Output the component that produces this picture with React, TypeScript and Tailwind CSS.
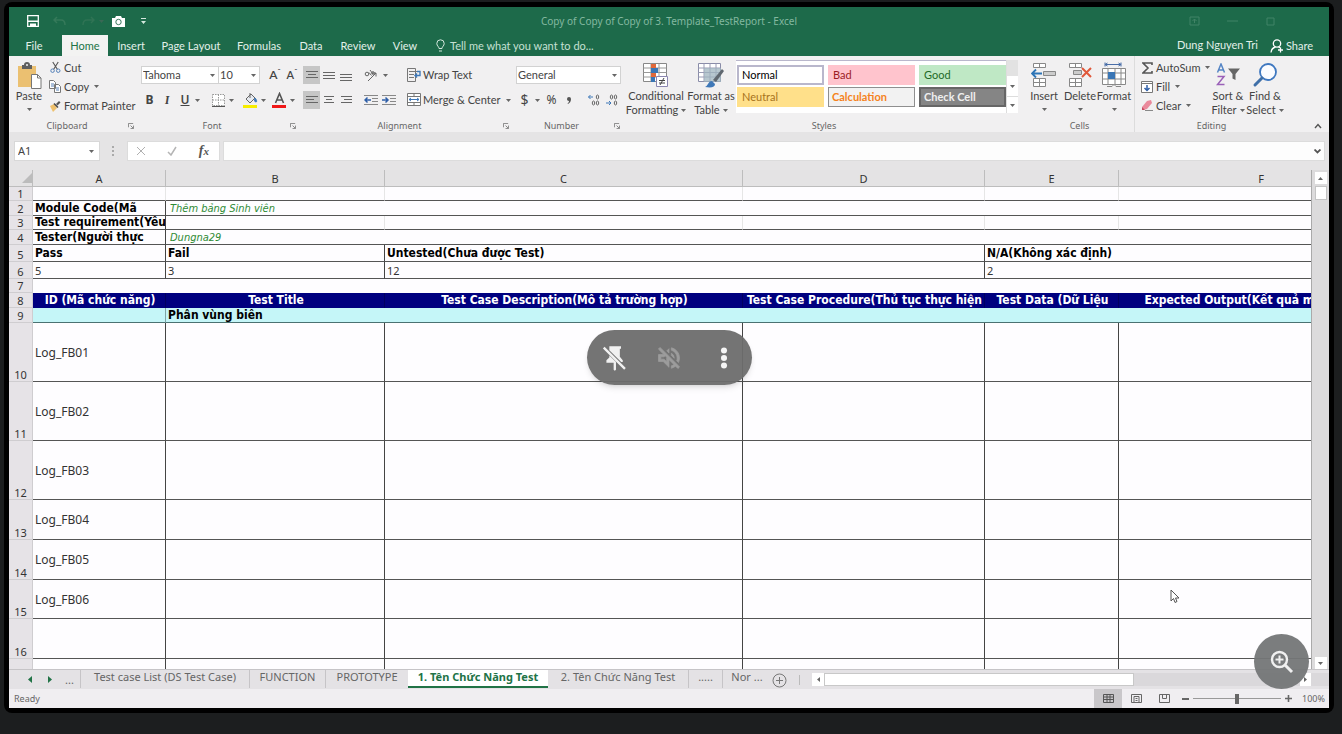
import { ReactNode } from "react";

const Caret = ({ className = "" }: { className?: string }) => (
  <svg viewBox="0 0 5 3" aria-hidden="true" className={`h-[3px] w-[5px] shrink-0 fill-[#666] ${className}`}>
    <path d="M0 0h5L2.5 3z" />
  </svg>
);

function Group({ label, className, launcher = false, trailing, children }: {
  label: string; className: string; launcher?: boolean; trailing?: ReactNode; children: ReactNode;
}) {
  return (
    <section aria-label={label} className={`flex shrink-0 flex-col ${className}`}>
      <div className="flex h-[64px] items-start">{children}</div>
      <div className="flex h-[12px] items-center font-['Noto_Sans',sans-serif] text-[9px] leading-[12px] text-[#666]">
        <span className="flex-1 text-center">{label}</span>
        {launcher && (
          <button aria-label={`${label} settings`} className="flex w-3 items-center justify-center">
            <svg viewBox="0 0 7 7" className="h-[6px] w-[6px] fill-none stroke-[#777]">
              <path d="M.5 5V.5H6M3 3l3 3M6.500 3v3.500H3" />
            </svg>
          </button>
        )}
        {trailing}
      </div>
    </section>
  );
}

const Row = ({ children, className = "" }: { children: ReactNode; className?: string }) => (
  <div className={`flex h-[18px] items-center ${className}`}>{children}</div>
);

function Dropdown({ label, value, className }: { label: string; value: string; className: string }) {
  return (
    <div className={`relative flex h-[18px] items-center border border-[#d2d2d2] bg-white ${className}`}>
      <select aria-label={label} className="h-full w-full appearance-none bg-transparent pl-px text-[11px] leading-[16px] text-[#444] outline-none">
        <option>{value}</option>
      </select>
      <Caret className="pointer-events-none absolute right-[3px]" />
    </div>
  );
}

function SmallCommand({ icon, text, caret = false }: { icon: ReactNode; text: string; caret?: boolean }) {
  return (
    <button className="flex h-[19px] items-center gap-[3px] whitespace-nowrap">
      <span className="flex w-3 justify-center">{icon}</span>
      {text}
      {caret && <Caret className="ml-[2px]" />}
    </button>
  );
}

function BigCommand({ icon, lines, className, caretLine = false }: {
  icon: ReactNode; lines: string[]; className: string; caretLine?: boolean;
}) {
  return (
    <button className={`flex shrink-0 flex-col items-center pt-[5px] leading-[14px] whitespace-nowrap ${className}`}>
      <span className="flex h-[28px] items-center justify-center">{icon}</span>
      <span>{lines[0]}</span>
      {caretLine ? (
        <span className="flex h-3 items-center"><Caret /></span>
      ) : (
        <span className="flex items-center gap-[3px]">{lines[1]}<Caret /></span>
      )}
    </button>
  );
}

const Lines = ({ d, className = "" }: { d: string; className?: string }) => (
  <svg viewBox="0 0 12 12" className={`h-3 w-3 fill-none stroke-[#666] ${className}`}>
    <path d={d} />
  </svg>
);

const AlignButton = ({ label, d, active = false }: { label: string; d: string; active?: boolean }) => (
  <button aria-label={label} className={`flex h-[18px] w-[17px] items-center justify-center ${active ? "bg-[#c6c6c6]" : ""}`}>
    <Lines d={d} />
  </button>
);

const cutIcon = (
  <svg viewBox="0 0 12 14" className="h-[13px] w-[11px] fill-none">
    <path d="M3 1l5 8M9 1L4 9" stroke="#555" strokeWidth="1.200" />
    <circle cx="2.800" cy="10.500" r="1.900" stroke="#4a7ab5" /><circle cx="9" cy="10.500" r="1.900" stroke="#4a7ab5" />
  </svg>
);
const copyIcon = (
  <svg viewBox="0 0 12 13" className="h-[13px] w-3" fill="#fff" stroke="#777">
    <path d="M.5.5h4l2 2v6h-6zM5.500 4.500h4l2 2v6h-6z" /><path d="M2 4h3M2 6h3M7 8h3M7 10h3" stroke="#5a83b8" />
  </svg>
);
const painterIcon = (
  <svg viewBox="0 0 12 12" className="h-3 w-3">
    <path d="M1 6l4-2 3 4-4 4z" fill="#eec06c" /><path d="M4.500 4l1-1 4 4-1 1z" fill="#444" /><path d="M7 4l3-3 1.500 1.500-3 3z" fill="#555" />
  </svg>
);
const pasteIcon = (
  <svg viewBox="0 0 25 27" className="h-[27px] w-[25px]">
    <path d="M1 4h18v21H1z" fill="#ebc071" /><path d="M5 3h2a3 3 0 0 1 6 0h2v4H5z" fill="#5f5f5f" />
    <circle cx="10" cy="3" r="1" fill="#f1f0f0" /><path d="M14.500 12.500h6l3.500 3.500v10.500h-9.500z" fill="#fff" stroke="#777" /><path d="M20.500 12.500V16H24" fill="none" stroke="#777" />
  </svg>
);
const conditionalIcon = (
  <svg viewBox="0 0 26 24" className="h-6 w-[26px]">
    <path d="M.5.500h23v18H.5z" fill="#fff" stroke="#888" /><path d="M.5 5h23M.5 9.500h23M.5 14h23M8 .5v18M16 .5v18" stroke="#999" />
    <path d="M8 1h5v4H8zM8 10h5v4H8z" fill="#e0683a" /><path d="M8 5h7v5H8zM8 14h4v5H8z" fill="#3a76b5" />
    <path d="M13.500 13.500h11v10h-11z" fill="#fff" stroke="#8a86b0" /><path d="M16 17.500h6M16 20h6M21 15l-4 7" stroke="#444" fill="none" />
  </svg>
);
const tableIcon = (
  <svg viewBox="0 0 26 25" className="h-[25px] w-[26px]">
    <path d="M.5.500h22v18H.5z" fill="#fff" stroke="#8a8ca8" /><path d="M.5 5h22M.5 9.500h22M.5 14h22M6 .5v18M12 .5v18M18 .5v18" stroke="#9a9cb4" />
    <path d="M6 5h17v14H6z" fill="#9fb4bf" opacity=".75" /><path d="M24 6l2 2-8 11-3-2z" fill="#606870" /><path d="M7 24c3-1 3-6 7-6l3 3c0 3-3 4-10 3z" fill="#3f78b8" />
  </svg>
);
const insertIcon = (
  <svg viewBox="0 0 26 26" className="h-[26px] w-[26px]" fill="#fff" stroke="#888">
    <path d="M2.500 1.500h12v4h-12zM8.500 1.500v4M2.500 16.500h12v8h-12zM8.500 16.500v8M2.500 20.500h12" /><path d="M12.500 9.500h12v4h-12z" fill="#ccc" />
    <path d="M1 11.500h10M5 7.500l-4 4 4 4" fill="none" stroke="#2e75b6" strokeWidth="1.800" />
  </svg>
);
const deleteIcon = (
  <svg viewBox="0 0 26 26" className="h-[26px] w-[26px]" fill="#fff" stroke="#888">
    <path d="M2.500 1.500h12v4h-12zM8.500 1.500v4M2.500 16.500h12v8h-12zM8.500 16.500v8M2.500 20.500h12" /><path d="M6.500 8.500h8v4h-8z" fill="#ccc" />
    <path d="M15 6l9 9M24 6l-9 9" fill="none" stroke="#e0583a" strokeWidth="2" />
  </svg>
);
const formatIcon = (
  <svg viewBox="0 0 26 26" className="h-[26px] w-[26px]" fill="#fff" stroke="#888">
    <path d="M1.500 6.500h23v16h-23zM1.500 11h23M1.500 17h23M7 6.500v16M14 6.500v16M20 6.500v16" /><path d="M7 10h7v7H7z" fill="#3a76b5" stroke="none" />
    <path d="M4 2.500h16M4 .5v4M20 .5v4M6.500 1L4 2.500 6.500 4M17.500 1L20 2.500 17.500 4" fill="none" stroke="#4a6ea8" /><path d="M6 24.500h5l2-2 2 2h5" />
  </svg>
);
const sortIcon = (
  <svg viewBox="0 0 25 24" className="h-6 w-[25px] fill-none">
    <path d="M1.500 9.500L5 1l3.500 8.500M3 7h4" stroke="#5585c5" strokeWidth="1.500" /><path d="M1.500 13.500H8L1.500 21.500H8.500" stroke="#9a60b8" strokeWidth="1.500" />
    <path d="M12 5.500h12L19.500 11v6l-3-1.500V11z" fill="#666" />
  </svg>
);
const findIcon = (
  <svg viewBox="0 0 26 26" className="h-[26px] w-[26px]" strokeLinecap="round">
    <circle cx="16" cy="10" r="8" fill="#fbfcff" stroke="#3f78c0" strokeWidth="1.800" /><path d="M10 16l-7 7" stroke="#3f6fa8" strokeWidth="3" />
  </svg>
);

const styleItems = [
  { name: "Normal", cls: "border-2 border-[#b9b7cc] bg-white text-black" },
  { name: "Bad", cls: "border-2 border-[#ffc4cd] bg-[#ffc4cd] text-[#9c1c24]" },
  { name: "Good", cls: "border-2 border-[#bfe8c5] bg-[#bfe8c5] text-[#1f6b28]" },
  { name: "Neutral", cls: "border-2 border-[#ffe08a] bg-[#ffe08a] text-[#a8731c]" },
  { name: "Calculation", cls: "border border-[#8f8f8f] bg-[#f2f2f2] font-bold text-[#f58220]" },
  { name: "Check Cell", cls: "border-2 border-[#666] bg-[#858585] font-bold text-[#efefef]" },
];

function Ribbon() {
  return (
    <div className="flex h-[76px] shrink-0 overflow-hidden bg-[#f1f0f1] font-['Lato','Noto_Sans',sans-serif] text-[11px] leading-[14px] text-[#444]">
      <Group label="Clipboard" launcher className="w-[128px]">
        <BigCommand icon={pasteIcon} lines={["Paste"]} caretLine className="w-[40px]" />
        <div className="flex flex-col pt-[2px]">
          <SmallCommand icon={cutIcon} text="Cut" />
          <SmallCommand icon={copyIcon} text="Copy" caret />
          <SmallCommand icon={painterIcon} text="Format Painter" />
        </div>
      </Group>

      <Group label="Font" launcher className="w-[162px]">
        <div className="flex flex-col gap-[7px] pt-[10px] pl-1">
          <Row>
            <Dropdown label="Font name" value="Tahoma" className="w-[78px]" />
            <Dropdown label="Font size" value="10" className="w-[41px] border-l-0" />
            <button aria-label="Increase font size" className="ml-[6px] w-[18px] text-[12px] font-semibold">A<sup className="text-[8px]">ˆ</sup></button>
            <button aria-label="Decrease font size" className="w-[16px] text-[11px] font-semibold">A<sup className="text-[8px]">ˇ</sup></button>
          </Row>
          <Row className="font-['Noto_Sans',sans-serif] text-[12px]">
            <button aria-label="Bold" className="w-[17px] font-bold">B</button>
            <button aria-label="Italic" className="w-[18px] font-serif font-bold italic">I</button>
            <button aria-label="Underline" className="w-[18px] font-semibold underline">U</button>
            <Caret className="ml-px" />
            <button aria-label="Borders" className="ml-[12px]">
              <svg viewBox="0 0 13 13" className="h-[13px] w-[13px] fill-white stroke-[#999]"><path d="M.5.500h12v11H.5zM6.500.5v11M.5 6h12" strokeDasharray="1.500 1" /><path d="M0 12.500h13" stroke="#555" /></svg>
            </button>
            <Caret className="ml-[4px]" />
            <button aria-label="Fill colour" className="ml-[9px]">
              <svg viewBox="0 0 15 16" className="h-4 w-[15px]"><path d="M3 7l5-5 4 4-5 5z" fill="#e7eaf0" stroke="#666" /><path d="M7 1v5" stroke="#666" /><path d="M12 6c2 2 2 4 1 4s-2-1-1-4z" fill="#3f78b8" stroke="#3f78b8" /><path d="M0 13h14v3H0z" fill="#f7ee00" /></svg>
            </button>
            <Caret className="ml-[3px]" />
            <button aria-label="Font colour" className="ml-[6px]">
              <svg viewBox="0 0 15 16" className="h-4 w-[15px]"><path d="M3.500 11L7.500 1.500 11.500 11M5 8h5" fill="none" stroke="#555" strokeWidth="1.600" /><path d="M0 13h14v3H0z" fill="#f01818" /></svg>
            </button>
            <Caret className="ml-[3px]" />
          </Row>
        </div>
      </Group>

      <Group label="Alignment" launcher className="w-[213px]">
        <div className="flex flex-col gap-[7px] pt-[10px] pl-1">
          <Row>
            <AlignButton label="Top align" active d="M0 2.500h12M2 5.500h8M0 8.500h12" />
            <AlignButton label="Middle align" d="M0 3.500h12M0 6.500h12M0 9.500h12" />
            <AlignButton label="Bottom align" d="M0 5.500h12M0 8.500h12M0 11.500h12" />
            <button aria-label="Orientation" className="ml-[10px] flex items-center gap-[5px]">
              <svg viewBox="0 0 14 13" className="h-[13px] w-[14px] fill-none stroke-[#666]"><path d="M4 12l8-8M8.500 4H12v3.500" /><circle cx="3" cy="5" r="1.800" /><path d="M5 3.500l2.500 3M6 1l3 4" /><circle cx="9" cy="4" r="1.300" /></svg>
              <Caret />
            </button>
            <button className="ml-[19px] flex items-center gap-[2px] whitespace-nowrap">
              <svg viewBox="0 0 14 14" className="h-[14px] w-[14px] fill-none stroke-[#777]"><path d="M.5 13.500V.500h8v13zM2 3.500h8M2 6.500h5M2 9.500h5" /><path d="M10 3.500h3v4H8M10 5.500l-2 2 2 2" stroke="#3f78b8" strokeWidth="1.400" /></svg>
              Wrap Text
            </button>
          </Row>
          <Row>
            <AlignButton label="Align left" active d="M0 2.500h12M0 5.500h8M0 8.500h12" />
            <AlignButton label="Centre" d="M1 2.500h10M3 5.500h6M1 8.500h10" />
            <AlignButton label="Align right" d="M1 2.500h11M4 5.500h8M1 8.500h11" />
            <button aria-label="Decrease indent" className="ml-[10px]">
              <svg viewBox="0 0 14 12" className="h-3 w-[14px] fill-none stroke-[#888]"><path d="M0 1.500h14M8 4.500h6M8 7.500h6M0 10.500h14" /><path d="M7 6H1M3.500 3.500L1 6l2.500 2.500" stroke="#2f5fa8" strokeWidth="1.500" /></svg>
            </button>
            <button aria-label="Increase indent" className="ml-1">
              <svg viewBox="0 0 14 12" className="h-3 w-[14px] fill-none stroke-[#888]"><path d="M0 1.500h14M8 4.500h6M8 7.500h6M0 10.500h14" /><path d="M0 6h6M3.500 3.500L6 6 3.500 8.500" stroke="#2f5fa8" strokeWidth="1.500" /></svg>
            </button>
            <button className="ml-[11px] flex items-center gap-[2px] whitespace-nowrap">
              <svg viewBox="0 0 14 14" className="h-[14px] w-[14px] fill-white stroke-[#777]"><path d="M.5.500h13v12H.5zM.5 3.500h13M.5 9.500h13M7 .5v3M7 9.500v3" /><path d="M2 6.500h10M4 5L2 6.500 4 8M10 5l2 1.500L10 8" fill="none" stroke="#3f78b8" /></svg>
              Merge &amp; Center
              <Caret className="ml-1" />
            </button>
          </Row>
        </div>
      </Group>

      <Group label="Number" launcher className="w-[111px]">
        <div className="flex flex-col gap-[7px] pt-[10px] pl-1">
          <Dropdown label="Number format" value="General" className="w-[105px]" />
          <Row className="font-['Noto_Sans',sans-serif] text-[12px]">
            <button aria-label="Accounting format" className="w-[17px] text-[14px]">$</button>
            <Caret className="ml-[2px]" />
            <button aria-label="Percent style" className="ml-[4px] w-[15px]">%</button>
            <button aria-label="Comma style" className="ml-[5px] flex w-[10px] justify-center">
              <svg viewBox="0 0 4 7" className="h-[7px] w-1 fill-[#555]"><path d="M0 2a2 2 0 0 1 4 0c0 2-1 4-3 5l-.5-.6C1.500 5.800 2 5 2 4 .8 4 0 3 0 2z" /></svg>
            </button>
            <button aria-label="Increase decimal" className="ml-[14px]">
              <svg viewBox="0 0 12 12" className="h-3 w-3 fill-none stroke-[#666]"><path d="M5 3H.5M2.500 1L.5 3l2 2" stroke="#3f78b8" /><ellipse cx="9.500" cy="3" rx="1.200" ry="2" /><ellipse cx="5.500" cy="9" rx="1.200" ry="2" /><ellipse cx="9.500" cy="9" rx="1.200" ry="2" /></svg>
            </button>
            <button aria-label="Decrease decimal" className="ml-[6px]">
              <svg viewBox="0 0 12 12" className="h-3 w-3 fill-none stroke-[#666]"><path d="M0 9h5M3 7l2 2-2 2" stroke="#3f78b8" /><ellipse cx="9.500" cy="9" rx="1.200" ry="2" /><ellipse cx="5.500" cy="3" rx="1.200" ry="2" /><ellipse cx="9.500" cy="3" rx="1.200" ry="2" /></svg>
            </button>
          </Row>
        </div>
      </Group>

      <Group label="Styles" className="w-[402px]">
        <BigCommand icon={conditionalIcon} lines={["Conditional", "Formatting"]} className="w-[66px]" />
        <BigCommand icon={tableIcon} lines={["Format as", "Table"]} className="w-[44px]" />
        <div className="mt-1 ml-[3px] flex h-[53px] bg-white">
          <div className="grid grid-cols-3 content-start gap-x-[4px] gap-y-[2px] border-t border-[#b9b7cc] pt-1 pl-px">
            {styleItems.map((s) => (
              <button key={s.name} className={`h-[20px] w-[87px] pl-[3px] text-left leading-[16px] ${s.cls}`}>{s.name}</button>
            ))}
          </div>
          <div className="flex w-3 flex-col justify-between border-l border-[#ddd]">
            <span className="h-[16px] bg-[#e2e2e2]" />
            <button aria-label="Scroll styles" className="flex h-[17px] items-center justify-center"><Caret /></button>
            <button aria-label="More styles" className="flex h-[17px] items-center justify-center border-t border-[#ddd]"><Caret /></button>
          </div>
        </div>
      </Group>

      <Group label="Cells" className="w-[110px] border-r border-[#dcdcdc]">
        <BigCommand icon={insertIcon} lines={["Insert"]} caretLine className="w-[38px]" />
        <BigCommand icon={deleteIcon} lines={["Delete"]} caretLine className="w-[34px]" />
        <BigCommand icon={formatIcon} lines={["Format"]} caretLine className="w-[34px]" />
      </Group>

      <Group label="Editing" className="min-w-[194px] flex-1" trailing={
        <button aria-label="Collapse ribbon" className="flex w-[41px] justify-end pr-[7px]">
          <svg viewBox="0 0 8 6" className="h-[6px] w-2 fill-none stroke-[#555]" strokeWidth="1.400"><path d="M1 5l3-3.500L7 5" /></svg>
        </button>
      }>
        <div className="flex w-[73px] shrink-0 flex-col items-start pt-[2px] pl-[6px]">
          <SmallCommand text="AutoSum" caret icon={<svg viewBox="0 0 11 12" className="h-3 w-[11px] fill-none stroke-[#555]" strokeWidth="1.600"><path d="M10 3V1H1l5 5-5 5h9V9" /></svg>} />
          <SmallCommand text="Fill" caret icon={<svg viewBox="0 0 12 12" className="h-3 w-3 fill-white stroke-[#777]"><path d="M.5.500h11v11H.5zM.5 2.500h11" /><path d="M6 4v5.500M3.500 7L6 9.500 8.500 7" fill="none" stroke="#2f5fa8" strokeWidth="1.500" /></svg>} />
          <SmallCommand text="Clear" caret icon={<svg viewBox="0 0 12 12" className="h-3 w-3"><path d="M6 1l4-1 1 3-5 6-4 1-1-3z" fill="#ea8a9c" /><path d="M1 7l3 3-3 0z" fill="#c8485e" /><path d="M4 10.500h8" stroke="#888" /></svg>} />
        </div>
        <BigCommand icon={sortIcon} lines={["Sort &", "Filter"]} className="w-[40px]" />
        <BigCommand icon={findIcon} lines={["Find &", "Select"]} className="w-[34px]" />
      </Group>
    </div>
  );
}

const menu = [
  { name: "Home", cls: "w-[46px] bg-[#f3f3f2] text-[#217346]" },
  { name: "Insert", cls: "w-[46px]" },
  { name: "Page Layout", cls: "w-[74px]" },
  { name: "Formulas", cls: "w-[62px]" },
  { name: "Data", cls: "w-[42px]" },
  { name: "Review", cls: "w-[52px]" },
  { name: "View", cls: "w-[42px]" },
];

function TitleBar() {
  return (
    <header className="shrink-0 bg-[#1d6a4a] text-[#e2f0e9]">
      <div className="relative flex h-[28px] items-center pl-[18px]">
        <button aria-label="Save">
          <svg viewBox="0 0 12 12" className="h-3 w-3"><path d="M.7.700h10.600v10.600H.7z" fill="none" stroke="#fff" strokeWidth="1.300" /><path d="M1 5.500h10v1.500H1zM3 8.500h6V12H3z" fill="#fff" /></svg>
        </button>
        <button aria-label="Undo" className="ml-[14px]">
          <svg viewBox="0 0 13 11" className="h-[11px] w-[13px] fill-none stroke-[#35795a]" strokeWidth="1.500"><path d="M4 1L1 4l3 3M1 4h7q4 0 4 5" /></svg>
        </button>
        <button aria-label="Redo" className="ml-[16px] flex items-center gap-1">
          <svg viewBox="0 0 13 11" className="h-[11px] w-[13px] fill-none stroke-[#2f7354]" strokeWidth="1.500"><path d="M9 1l3 3-3 3M12 4H5Q1 4 1 9" /></svg>
          <Caret className="opacity-40" />
        </button>
        <button aria-label="Camera" className="ml-[8px]">
          <svg viewBox="0 0 13 11" className="h-[11px] w-[13px]"><path d="M0 2h3l1-2h5l1 2h3v9H0z" fill="#fff" /><circle cx="6.500" cy="6" r="2.700" fill="none" stroke="#3d7a60" /></svg>
        </button>
        <button aria-label="Customise toolbar" className="ml-[16px]">
          <svg viewBox="0 0 5 6" className="h-[6px] w-[5px] fill-[#d5e8de]"><path d="M0 0h5v1H0zM0 3h5L2.500 6z" /></svg>
        </button>
        <h1 className="pointer-events-none absolute inset-0 flex items-center justify-center text-[10px] text-[#83b8a0]">Copy of Copy of Copy of 3. Template_TestReport - Excel</h1>
        <div className="ml-auto flex items-center gap-[26px] pr-[52px]">
          {["M1 2h9v8H1zM5.500 8V4M3.500 6l2-2 2 2", "M0 6h11", "M2 3h7v7H2z"].map((d, i) => (
            <button key={d} aria-label={["Ribbon options", "Minimise", "Maximise"][i]}>
              <svg viewBox="0 0 12 12" className="h-3 w-3 fill-none stroke-[#418366]"><path d={d} /></svg>
            </button>
          ))}
        </div>
      </div>
      <nav className="flex h-[21px] items-stretch font-['Lato','Noto_Sans',sans-serif] text-[11px] leading-[20px]">
        <button className="w-[53px] pr-[3px]">File</button>
        {menu.map((m) => <button key={m.name} className={`whitespace-nowrap ${m.cls}`}>{m.name}</button>)}
        <button className="ml-[10px] flex items-center gap-[5px] whitespace-nowrap text-[#c5e0d3]">
          <svg viewBox="0 0 9 13" className="h-[13px] w-[9px] fill-none stroke-[#d5e8de]"><path d="M3 9.500C3 7.500.8 7 .8 4.500a3.700 3.700 0 0 1 7.400 0C8.200 7 6 7.500 6 9.500zM3 12h3" /></svg>
          Tell me what you want to do...
        </button>
        <span className="ml-auto pr-[12px] whitespace-nowrap">Dung Nguyen Tri</span>
        <button className="mr-4 flex items-center gap-[2px]">
          <svg viewBox="0 0 14 14" className="h-[14px] w-[14px] fill-none stroke-white" strokeWidth="1.300"><circle cx="7" cy="4.500" r="3.700" /><path d="M5.500 8Q1.500 9 1 13.500M8.500 8l2 1M10.500 8.500v5M8 11h5" /></svg>
          Share
        </button>
      </nav>
    </header>
  );
}

function FormulaBar() {
  return (
    <div className="flex shrink-0 items-center bg-[#e5e4e5] py-[9px] pr-[4px] pl-[5px]">
      <div className="relative flex h-5 w-[86px] items-center border border-[#d8d8d8] bg-white">
        <input aria-label="Name box" defaultValue="A1" className="w-full bg-transparent pl-[3px] text-[11px] text-[#444] outline-none" />
        <Caret className="absolute right-[5px]" />
      </div>
      <svg viewBox="0 0 3 10" className="mx-[12px] h-[10px] w-[3px] fill-[#aaa]"><path d="M0 0h2v2H0zM0 4h2v2H0zM0 8h2v2H0z" /></svg>
      <div className="flex h-5 w-[93px] items-center justify-between border border-[#dcdcdc] bg-white pr-[10px] pl-[8px]">
        <button aria-label="Cancel"><svg viewBox="0 0 10 10" className="h-[10px] w-[10px] fill-none stroke-[#b0b0b0]"><path d="M1 1l8 8M9 1L1 9" /></svg></button>
        <button aria-label="Enter"><svg viewBox="0 0 10 10" className="h-[10px] w-[10px] fill-none stroke-[#b5b5b5]" strokeWidth="1.500"><path d="M1 6l3 3 5-8" /></svg></button>
        <button aria-label="Insert function" className="font-['Liberation_Serif',serif] text-[14px] leading-[16px] font-bold text-[#555] italic">f<span className="text-[11px]">x</span></button>
      </div>
      <div className="ml-[3px] flex h-5 flex-1 items-center border border-[#dcdcdc] bg-[#fdfdfd] pr-[3px]">
        <input aria-label="Formula" className="w-full bg-transparent outline-none" />
        <svg viewBox="0 0 7 5" className="h-[5px] w-[7px] fill-none stroke-[#555]" strokeWidth="1.800"><path d="M.5.500l3 3 3-3" /></svg>
      </div>
    </div>
  );
}

type Cell = { text?: string; span?: number; cls?: string };
const white = "bg-[#fefdff]";
const dark = `${white} border-b border-b-[#555]`;
const faint = "border-r border-r-[#e6e6e6]";
const line = "border-r border-r-[#444]";
const boldCell = "font-['DejaVu_Sans_Condensed','DejaVu_Sans',sans-serif] text-[12px] font-bold text-black";
const navy = "bg-[#00007f] border-r border-r-[#000060] text-center font-['DejaVu_Sans_Condensed','DejaVu_Sans',sans-serif] text-[12px] font-bold text-white";
const cyan = "border-b border-b-[#4b7272] bg-[#c5f6f8]";
const green = "pl-[4px] font-['DejaVu_Sans_Condensed','DejaVu_Sans',sans-serif] text-[11px] italic text-[#2e8b35]";

const caseRow = (text?: string): Cell[] => [
  { text, cls: `${dark} ${line} text-[12px]` },
  ...Array.from({ length: 5 }, () => ({ cls: `${dark} ${line}` })),
];

const rows: { h: string; cells: Cell[] }[] = [
  { h: "h-[14px]", cells: Array.from({ length: 6 }, () => ({ cls: `${dark} ${faint}` })) },
  { h: "h-[15px]", cells: [{ text: "Module Code(Mã", cls: `${dark} ${line} ${boldCell}` }, { text: "Thêm bảng Sinh viên", span: 5, cls: `${dark} ${green}` }] },
  { h: "h-[14px]", cells: [{ text: "Test requirement(Yêu", cls: `${dark} ${line} ${boldCell}` }, ...Array.from({ length: 5 }, () => ({ cls: `${dark} ${faint}` }))] },
  { h: "h-[15px]", cells: [{ text: "Tester(Người thực", cls: `${dark} ${line} ${boldCell}` }, { text: "Dungna29", span: 5, cls: `${dark} ${green}` }] },
  { h: "h-[17px]", cells: [{ text: "Pass", cls: `${dark} ${line} ${boldCell}` }, { text: "Fail", cls: `${dark} ${line} ${boldCell}` }, { text: "Untested(Chưa được Test)", span: 2, cls: `${dark} ${line} ${boldCell}` }, { text: "N/A(Không xác định)", span: 2, cls: `${dark} ${boldCell}` }] },
  { h: "h-[17px]", cells: [{ text: "5", cls: `${dark} ${line}` }, { text: "3", cls: `${dark} ${line}` }, { text: "12", span: 2, cls: `${dark} ${line}` }, { text: "2", span: 2, cls: dark }] },
  { h: "h-[14px]", cells: [{ span: 6, cls: white }] },
  { h: "h-[15px]", cells: ["ID (Mã chức năng)", "Test Title", "Test Case Description(Mô tả trường hợp)", "Test Case Procedure(Thủ tục thực hiện", "Test Data (Dữ Liệu", "Expected Output(Kết quả mong muốn)"].map((text) => ({ text, cls: navy })) },
  { h: "h-[15px]", cells: [{ cls: `${cyan} border-r border-r-[#7fa5a5]` }, { text: "Phân vùng biên", span: 5, cls: `${cyan} ${boldCell}` }] },
  { h: "h-[59px]", cells: caseRow("Log_FB01") },
  { h: "h-[59px]", cells: caseRow("Log_FB02") },
  { h: "h-[59px]", cells: caseRow("Log_FB03") },
  { h: "h-[40px]", cells: caseRow("Log_FB04") },
  { h: "h-[40px]", cells: caseRow("Log_FB05") },
  { h: "h-[39px]", cells: caseRow("Log_FB06") },
  { h: "h-[40px]", cells: caseRow() },
];

function Sheet() {
  return (
    <div className="flex min-h-0 flex-1 bg-[#e5e4e5]">
      <div className="min-w-0 flex-1 overflow-hidden border-r border-[#aaa]">
        <table className="w-[1395px] table-fixed border-separate border-spacing-0 text-[11px] leading-[13px] text-[#333]">
          <colgroup>
            <col className="w-[24px]" /><col className="w-[133px]" /><col className="w-[219px]" /><col className="w-[358px]" />
            <col className="w-[242px]" /><col className="w-[134px]" /><col className="w-[285px]" />
          </colgroup>
          <thead>
            <tr className="h-[17px] bg-[#e4e3e4]">
              <th className="border-r border-b border-[#bdbdbd] p-0"><svg viewBox="0 0 10 10" className="ml-auto h-[10px] w-[10px] fill-[#bcbcbc]"><path d="M10 0v10H0z" /></svg></th>
              {["A", "B", "C", "D", "E", "F"].map((c) => <th key={c} scope="col" className="border-r border-b border-[#bdbdbd] p-0 font-normal">{c}</th>)}
            </tr>
          </thead>
          <tbody>
            {rows.map((r, i) => (
              <tr key={i} className={r.h}>
                <th scope="row" className="border-r border-b border-[#cfcdd0] bg-[#e6e3e7] p-0 text-center align-bottom font-normal">{i + 1}</th>
                {r.cells.map((c, j) => (
                  <td key={j} colSpan={c.span ?? 1} className={`overflow-hidden p-0 pl-[2px] align-middle whitespace-nowrap ${c.cls ?? ""}`}>{c.text}</td>
                ))}
              </tr>
            ))}
            <tr className="h-[40px]">
              <th className="border-r border-[#cfcdd0] bg-[#e6e3e7] p-0" />
              {["A", "B", "C", "D", "E", "F"].map((c) => <td key={c} className={`p-0 ${dark} ${line}`} />)}
            </tr>
          </tbody>
        </table>
      </div>
      <div className="flex w-[17px] flex-col items-center bg-[#dcdbdc]">
        <button aria-label="Scroll up" className="mt-[2px] flex h-3 w-3 items-center justify-center bg-white"><Caret className="rotate-180" /></button>
        <span className="mt-[2px] h-[14px] w-3 border border-[#c4c4c4] bg-white" />
        <button aria-label="Scroll down" className="mt-auto flex h-3 w-3 items-center justify-center bg-white"><Caret /></button>
      </div>
    </div>
  );
}

const tabs = [
  { name: "Test case List (DS Test Case)", cls: "w-[169px] border-l border-[#c6c4c7]" },
  { name: "FUNCTION", cls: "w-[76px] border-l border-[#c6c4c7]" },
  { name: "PROTOTYPE", cls: "w-[83px] border-l border-[#c6c4c7]" },
  { name: "1. Tên Chức Năng Test", cls: "w-[140px] border-b-2 border-[#217346] bg-white font-bold text-[#217346]" },
  { name: "2. Tên Chức Năng Test", cls: "w-[140px]" },
  { name: ".....", cls: "w-[34px] border-l border-[#c6c4c7]" },
  { name: "Nor ...", cls: "w-[49px] border-l border-[#c6c4c7]" },
];

function BottomBars() {
  return (
    <footer className="shrink-0 text-[#666]">
      <div className="flex h-5 items-start border-t border-[#c6c4c7] bg-[#e4e2e5] text-[11px] leading-[14px]">
        <div className="flex h-full w-[71px] items-center pl-[19px]">
          <button aria-label="Previous sheet"><svg viewBox="0 0 4 7" className="h-[7px] w-1 fill-[#217346]"><path d="M4 0v7L0 3.500z" /></svg></button>
          <button aria-label="Next sheet" className="ml-4"><svg viewBox="0 0 4 7" className="h-[7px] w-1 fill-[#217346]"><path d="M0 0v7l4-3.500z" /></svg></button>
          <span className="ml-[13px]">...</span>
        </div>
        {tabs.map((t) => <button key={t.name} className={`flex h-[18px] shrink-0 justify-center whitespace-nowrap ${t.cls}`}>{t.name}</button>)}
        <button aria-label="New sheet" className="ml-[1px] shrink-0 self-center pt-px">
          <svg viewBox="0 0 15 15" className="h-[15px] w-[15px] fill-none stroke-[#777]"><circle cx="7.500" cy="7.500" r="6.500" /><path d="M7.500 4v7M4 7.500h7" /></svg>
        </button>
        <span className="mx-[12px] h-[10px] w-px self-center bg-[#bbb]" />
        <div className="flex h-[13px] flex-1 items-stretch self-center bg-[#dad8db]">
          <button aria-label="Scroll left" className="flex w-[12px] items-center justify-center bg-white"><svg viewBox="0 0 3 5" className="h-[5px] w-[3px] fill-[#666]"><path d="M3 0v5L0 2.500z" /></svg></button>
          <span className="w-[310px] border border-[#c8c8c8] bg-white" />
          <button aria-label="Scroll right" className="mr-[18px] ml-auto flex w-[11px] items-center justify-center bg-white"><svg viewBox="0 0 3 5" className="h-[5px] w-[3px] fill-[#666]"><path d="M0 0v5l3-2.500z" /></svg></button>
        </div>
      </div>
      <div className="flex h-[19px] items-center bg-[#f0eef1] pl-[5px] text-[9px]">
        <span>Ready</span>
        <div className="ml-auto flex h-full items-center">
          <button aria-label="Normal view" className="flex h-full w-[28px] items-center justify-center bg-[#c9c7ca]"><svg viewBox="0 0 11 9" className="h-[9px] w-[11px] fill-none stroke-[#555]"><path d="M.5.500h10v8H.5zM.5 3h10M.5 5.500h10M4 .5v8M7 .5v8" /></svg></button>
          <button aria-label="Page layout view" className="flex w-[28px] justify-center"><svg viewBox="0 0 11 9" className="h-[9px] w-[11px] fill-none stroke-[#666]"><path d="M.5.500h10v8H.5zM3 2.500h5v6M3 2.500v6M4.500 4.500h2M4.500 6.500h2" /></svg></button>
          <button aria-label="Page break view" className="flex w-[28px] justify-center"><svg viewBox="0 0 11 9" className="h-[9px] w-[11px] fill-none stroke-[#666]"><path d="M.5.500h10v8H.5zM3.500.5v4h4V.5" /></svg></button>
          <span className="ml-[4px] h-[2px] w-[7px] bg-[#666]" />
          <div className="mx-[4px] flex w-[88px] items-center">
            <input type="range" aria-label="Zoom" defaultValue={50} className="h-[10px] w-full appearance-none bg-transparent [&::-webkit-slider-runnable-track]:h-px [&::-webkit-slider-runnable-track]:bg-[#999] [&::-webkit-slider-thumb]:-mt-[4px] [&::-webkit-slider-thumb]:h-[10px] [&::-webkit-slider-thumb]:w-1 [&::-webkit-slider-thumb]:appearance-none [&::-webkit-slider-thumb]:bg-[#666]" />
          </div>
          <svg viewBox="0 0 7 7" className="h-[7px] w-[7px] stroke-[#666]" strokeWidth="1.600"><path d="M3.500 0v7M0 3.500h7" /></svg>
          <span className="w-[37px] pr-1 text-right">100%</span>
        </div>
      </div>
    </footer>
  );
}

export default function App() {
  return (
    <main className="h-screen bg-[#1c1e1f] pt-[2px] pr-[8px] pb-[21px] pl-[4px] font-['Noto_Sans',sans-serif]">
      <div className="relative flex h-full flex-col overflow-hidden rounded-lg bg-black p-[5px]">
        <TitleBar />
        <Ribbon />
        <FormulaBar />
        <Sheet />
        <BottomBars />

        <div className="absolute inset-0 m-auto flex h-[55px] w-[165px] items-center justify-around rounded-full bg-[#6d6d6d]/95 shadow-md">
          <button aria-label="Unpin">
            <svg viewBox="0 0 24 24" className="h-7 w-7 fill-[#f1f1f1]"><path d="M8 2h10v2h-1v7l2.500 3v1.500h-1.300L8 5.300zM8 9.800l5.700 5.700V22l-1 1-1-1v-6H5.500v-2L8 11.500zM2.500 3.800L3.900 2.400l18.200 18.200-1.400 1.400z" /></svg>
          </button>
          <button aria-label="Muted">
            <svg viewBox="0 0 24 24" className="h-7 w-7 fill-[#9c9c9c] stroke-[#9c9c9c]" strokeWidth=".6"><path d="M4.340 2.930L2.930 4.340 7.290 8.700 7 9H3v6h4l5 5v-6.590l4.180 4.180c-.65.490-1.380.880-2.180 1.110v2.060a8.940 8.940 0 0 0 3.610-1.750l2.050 2.050 1.410-1.410zM10 15.170L7.830 13H5v-2h2.830l.88-.88L10 11.410zM19 12c0 .82-.15 1.610-.41 2.340l1.530 1.530c.56-1.170.88-2.480.88-3.870 0-4.280-2.990-7.860-7-8.770v2.060c2.890.86 5 3.540 5 6.710zm-7-8l-1.880 1.880L12 7.760zm4.500 8A4.500 4.500 0 0 0 14 7.970v1.790l2.480 2.480c.01-.08.020-.160.020-.24z" /></svg>
          </button>
          <button aria-label="More options">
            <svg viewBox="0 0 24 24" className="h-7 w-7 fill-[#f5f5f5]"><circle cx="12" cy="5.500" r="2.600" /><circle cx="12" cy="12" r="2.600" /><circle cx="12" cy="18.500" r="2.600" /></svg>
          </button>
        </div>

        <button aria-label="Zoom in" className="absolute right-[25px] bottom-6 flex h-[55px] w-[55px] items-center justify-center rounded-full bg-[#747677]/95">
          <svg viewBox="0 0 24 24" className="h-6 w-6 fill-none stroke-[#f0f0f0]"><circle cx="9.500" cy="9.500" r="7.500" strokeWidth="2.400" /><path d="M15 15l7 7" strokeWidth="3" /><path d="M9.500 5.500v8M5.500 9.500h8" strokeWidth="2" /></svg>
        </button>

        <svg viewBox="0 0 10 15" className="absolute right-[154px] bottom-[109px] h-[15px] w-[10px] fill-white stroke-[#555]"><path d="M1 1v11l2.500-2.500L5 13.500l2-1L5.500 9H9z" /></svg>
      </div>
    </main>
  );
}
